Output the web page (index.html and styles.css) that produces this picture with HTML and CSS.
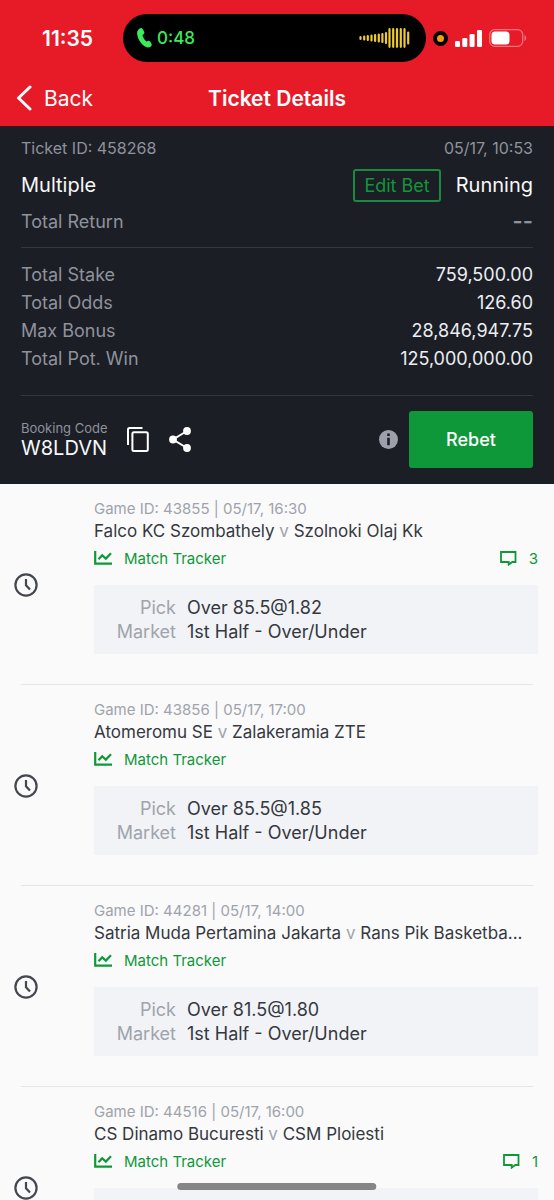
FILE: index.html
```html
<!DOCTYPE html>
<html lang="en">
<head>
<meta charset="utf-8">
<meta name="viewport" content="width=device-width, initial-scale=1">
<title>Ticket Details</title>
<link rel="stylesheet" href="styles.css">
</head>
<body>
<svg class="sprite" aria-hidden="true">
  <symbol id="clock" viewBox="0 0 24 24"><circle cx="12" cy="12" r="10.6" fill="none" stroke="currentColor" stroke-width="2.2"/><path d="M12 6v6.2l4 4.4" fill="none" stroke="currentColor" stroke-width="2.2"/></symbol>
  <symbol id="chart" viewBox="0 0 18 14"><path d="M1.200 0v12.600h16.800M4.500 8.200 8.200 4.200l3.600 3.400L17 2.200" fill="none" stroke="currentColor" stroke-width="2.200"/></symbol>
  <symbol id="comment" viewBox="0 0 17 15"><path d="M1 1h14.500v10h-3.200l-3.600 2.600V11H1z" fill="none" stroke="currentColor" stroke-width="1.800"/></symbol>
</svg>
<div class="app">
  <header class="header">
    <div class="status">
      <span class="status-time">11:35</span>
      <div class="island">
        <svg class="phone" viewBox="0 0 15 20" aria-hidden="true"><path d="M2.6.6C3.6-.1 5-.1 5.700 1l1.500 2.800c.4.9.2 1.700-.5 2.300l-.9.8c-.3.4-.3.800-.1 1.200.7 1.900 1.700 3.500 3.100 4.900.4.4.8.5 1.200.3l1.100-.4c.8-.3 1.600 0 2.100.700l1.300 2.200c.5.900.2 1.900-.700 2.600-1.900 1.500-4.400 1.300-6.700-.4C3.600 15.300.9 11.200.2 6.500-.1 3.900.7 1.800 2.600.6z" fill="#3bea5c"/></svg>
        <span class="call-time">0:48</span>
        <svg class="wave" viewBox="0 0 51 20" aria-hidden="true"><path d="M1.500 9v2M5.200 8.500v3M8.800 8v4M12.500 7.500v5M16.100 7v6M19.800 6.500v7M23.400 6v8M27 5v10M30.500 1.200v17.600M34.200 1.200v17.600M38 1.200v17.600M41.800 1.200v17.600M45.500 1.200v17.600M49.200 4.500v11" stroke="#eccb2c" stroke-width="2.200" stroke-linecap="round"/></svg>
      </div>
      <span class="mic"></span>
      <svg class="signal" viewBox="0 0 27 17" aria-hidden="true" fill="#fff"><rect y="11" width="5" height="6" rx="1.200"/><rect x="7.300" y="8" width="5" height="9" rx="1.200"/><rect x="14.600" y="4" width="5" height="13" rx="1.200"/><rect x="22" width="5" height="17" rx="1.200"/></svg>
      <svg class="battery" viewBox="0 0 38 18" aria-hidden="true"><rect x=".7" y=".7" width="33" height="16.600" rx="5" fill="none" stroke="#f2757d" stroke-width="1.300"/><rect x="2.500" y="2.500" width="18" height="13" rx="3.500" fill="#fff"/><path d="M35.500 6v6c2.200-1 2.200-5 0-6z" fill="#f2757d"/></svg>
    </div>
    <nav class="nav">
      <button class="back" type="button"><svg class="chevron" viewBox="0 0 16 26" aria-hidden="true"><path d="M14 2 2.500 13 14 24" fill="none" stroke="#fff" stroke-width="3" stroke-linecap="round" stroke-linejoin="round"/></svg>Back</button>
      <h1 class="title">Ticket Details</h1>
    </nav>
  </header>

  <section class="ticket">
    <div class="row meta"><span>Ticket ID: 458268</span><span>05/17, 10:53</span></div>
    <div class="row kind"><span class="strong">Multiple</span><span class="state"><button class="edit" type="button">Edit Bet</button><span class="strong">Running</span></span></div>
    <div class="row return"><span>Total Return</span><span class="dashes">--</span></div>
    <dl class="totals">
      <div class="row"><dt>Total Stake</dt><dd>759,500.00</dd></div>
      <div class="row"><dt>Total Odds</dt><dd>126.60</dd></div>
      <div class="row"><dt>Max Bonus</dt><dd>28,846,947.75</dd></div>
      <div class="row"><dt>Total Pot. Win</dt><dd>125,000,000.00</dd></div>
    </dl>
    <div class="booking">
      <div class="code"><span class="code-label">Booking Code</span><span class="code-value">W8LDVN</span></div>
      <button class="icon-btn" type="button" aria-label="Copy code"><svg class="copy" viewBox="0 0 22 25" aria-hidden="true"><path d="M1 18V2.500C1 1.500 1.500 1 2.500 1H15.500" fill="none" stroke="#fff" stroke-width="2"/><rect x="5.400" y="5.300" width="15.400" height="18.600" rx="1.500" fill="none" stroke="#fff" stroke-width="2"/></svg></button>
      <button class="icon-btn" type="button" aria-label="Share"><svg class="share" viewBox="0 0 22 25" aria-hidden="true"><path d="M18 4 4 12.500 18 21" fill="none" stroke="#fff" stroke-width="2"/><g fill="#fff"><circle cx="18" cy="4" r="3.900"/><circle cx="4" cy="12.500" r="3.900"/><circle cx="18" cy="21" r="3.900"/></g></svg></button>
      <button class="icon-btn info-btn" type="button" aria-label="Info"><svg class="info" viewBox="0 0 19 19" aria-hidden="true"><circle cx="9.500" cy="9.500" r="9.500" fill="#9ca0ab"/><path d="M8.200 3.500h2.600v2.500H8.200zM8.200 7.800h2.600v7.500H8.200z" fill="#1b1e25"/></svg></button>
      <button class="rebet" type="button">Rebet</button>
    </div>
  </section>

  <main class="games">
    <article class="game">
      <svg class="clock" aria-label="Pending"><use href="#clock"/></svg>
      <div class="body">
        <p class="game-id">Game ID: 43855 | 05/17, 16:30</p>
        <h2 class="teams">Falco KC Szombathely <span class="versus">v</span> Szolnoki Olaj Kk</h2>
        <div class="links"><a class="link" href="#tracker"><svg class="chart" aria-hidden="true"><use href="#chart"/></svg>Match Tracker</a><a class="link comments" href="#comments"><svg class="comment" aria-hidden="true"><use href="#comment"/></svg>3</a></div>
        <dl class="pick"><dt>Pick</dt><dd>Over 85.5@1.82</dd><dt>Market</dt><dd>1st Half - Over/Under</dd></dl>
      </div>
    </article>
    <article class="game">
      <svg class="clock" aria-label="Pending"><use href="#clock"/></svg>
      <div class="body">
        <p class="game-id">Game ID: 43856 | 05/17, 17:00</p>
        <h2 class="teams">Atomeromu SE <span class="versus">v</span> Zalakeramia ZTE</h2>
        <div class="links"><a class="link" href="#tracker"><svg class="chart" aria-hidden="true"><use href="#chart"/></svg>Match Tracker</a></div>
        <dl class="pick"><dt>Pick</dt><dd>Over 85.5@1.85</dd><dt>Market</dt><dd>1st Half - Over/Under</dd></dl>
      </div>
    </article>
    <article class="game">
      <svg class="clock" aria-label="Pending"><use href="#clock"/></svg>
      <div class="body">
        <p class="game-id">Game ID: 44281 | 05/17, 14:00</p>
        <h2 class="teams">Satria Muda Pertamina Jakarta <span class="versus">v</span> Rans Pik Basketba...</h2>
        <div class="links"><a class="link" href="#tracker"><svg class="chart" aria-hidden="true"><use href="#chart"/></svg>Match Tracker</a></div>
        <dl class="pick"><dt>Pick</dt><dd>Over 81.5@1.80</dd><dt>Market</dt><dd>1st Half - Over/Under</dd></dl>
      </div>
    </article>
    <article class="game">
      <svg class="clock" aria-label="Pending"><use href="#clock"/></svg>
      <div class="body">
        <p class="game-id">Game ID: 44516 | 05/17, 16:00</p>
        <h2 class="teams">CS Dinamo Bucuresti <span class="versus">v</span> CSM Ploiesti</h2>
        <div class="links"><a class="link" href="#tracker"><svg class="chart" aria-hidden="true"><use href="#chart"/></svg>Match Tracker</a><a class="link comments" href="#comments"><svg class="comment" aria-hidden="true"><use href="#comment"/></svg>1</a></div>
        <dl class="pick"></dl>
      </div>
    </article>
  </main>
  <div class="home-bar"></div>
</div>
</body>
</html>
```
FILE: styles.css
```css
* { box-sizing: border-box; }
body, h1, h2, p, dl, dd { margin: 0; }
body { font-family: Inter, "Liberation Sans", sans-serif; font-size: 18px; background: #fafafb; }
button { font: inherit; color: inherit; background: none; border: 0; padding: 0; cursor: pointer; }
a { text-decoration: none; }
svg { display: block; flex: none; }
.sprite { position: absolute; width: 0; height: 0; }
.app { height: 100vh; display: flex; flex-direction: column; }

.header { flex: none; background: #e71a28; color: #fff; padding-top: 14px; }
.status { display: flex; align-items: center; height: 48px; padding: 0 27px 0 42px; }
.status-time { width: 81px; font-size: 21px; font-weight: 600; }
.island { flex: 1; display: flex; align-items: center; height: 48px; padding: 0 16px 0 14px; border-radius: 24px; background: #000; }
.phone { width: 15px; height: 20px; }
.call-time { margin-left: 5px; font-size: 17px; font-weight: 500; color: #3bea5c; }
.wave { width: 51px; height: 20px; margin-left: auto; }
.mic { width: 15px; height: 15px; margin: 0 7px; border: 4px solid #000; border-radius: 50%; background: #fa9a0a; }
.signal { width: 27px; height: 17px; }
.battery { width: 38px; height: 18px; margin-left: 7px; }
.nav { display: grid; grid-template-columns: 1fr auto 1fr; align-items: center; height: 64px; padding: 8px 16px 0; }
.back { display: flex; align-items: center; gap: 12px; justify-self: start; font-size: 21px; }
.chevron { width: 16px; height: 26px; }
.title { font-size: 21px; font-weight: 600; }

.ticket { flex: none; padding: 10px 21px 16px; background: #1b1e25; color: #8f929c; border-top: 1px solid #3d1219; }
.row { display: flex; justify-content: space-between; align-items: center; }
.meta { height: 22px; font-size: 16px; }
.kind { height: 52px; }
.strong { font-size: 20px; color: #f8f8fa; }
.state { display: flex; align-items: center; gap: 15px; }
.edit { height: 33px; padding: 0 9px; border: 2px solid #1b8a3c; border-radius: 3px; color: #12963a; font-weight: 400; }
.return { height: 20px; }
.dashes { font-size: 22px; font-weight: 600; }
.totals { margin-top: 16px; padding: 12px 0 23px; border: solid #343740; border-width: 1px 0; }
.totals .row { height: 28px; }
.totals dd { color: #eceef2; }
.booking { display: flex; align-items: center; margin-top: 15px; }
.code { display: flex; flex-direction: column; margin-right: 19px; }
.code-label { font-size: 13px; line-height: 16px; }
.code-value { font-size: 20px; line-height: 24px; color: #f8f8fa; }
.icon-btn { margin-right: 20px; }
.copy, .share { width: 22px; height: 25px; }
.info { width: 19px; height: 19px; }
.info-btn { margin: 0 11px 0 auto; }
.rebet { width: 124px; height: 57px; border-radius: 3px; background: #0f9839; color: #fff; font-weight: 500; }

.games { flex: 1; min-height: 0; overflow: hidden; }
.game { display: flex; align-items: center; gap: 56px; padding: 0 16px 0 14px; position: relative; }
.game::after { content: ""; position: absolute; left: 21px; right: 21px; bottom: 0; height: 1px; background: #e4e5e8; }
.clock { width: 24px; height: 24px; color: #44474f; }
.body { flex: 1; min-width: 0; padding: 14px 0 31px; }
.game-id { font-size: 15px; line-height: 22px; color: #a0a3ac; }
.teams { font-size: 17px; line-height: 22px; font-weight: 400; color: #353840; white-space: nowrap; }
.versus { color: #a0a3ac; }
.links { display: flex; justify-content: space-between; height: 22px; margin-top: 5px; }
.link { display: flex; align-items: center; gap: 12px; font-size: 15px; color: #0f9839; }
.chart { width: 18px; height: 14px; }
.comment { width: 17px; height: 15px; }
.pick { display: grid; grid-template-columns: 82px 1fr; column-gap: 11px; align-content: start; min-height: 69px; margin-top: 16px; padding: 11px 0 10px; background: #f1f3f6; line-height: 24px; color: #353840; }
.pick dt { text-align: right; color: #a0a3ac; }
.home-bar { position: fixed; left: 50%; bottom: 10px; width: 36%; height: 7px; transform: translateX(-50%); border-radius: 4px; background: #858585; }
```
